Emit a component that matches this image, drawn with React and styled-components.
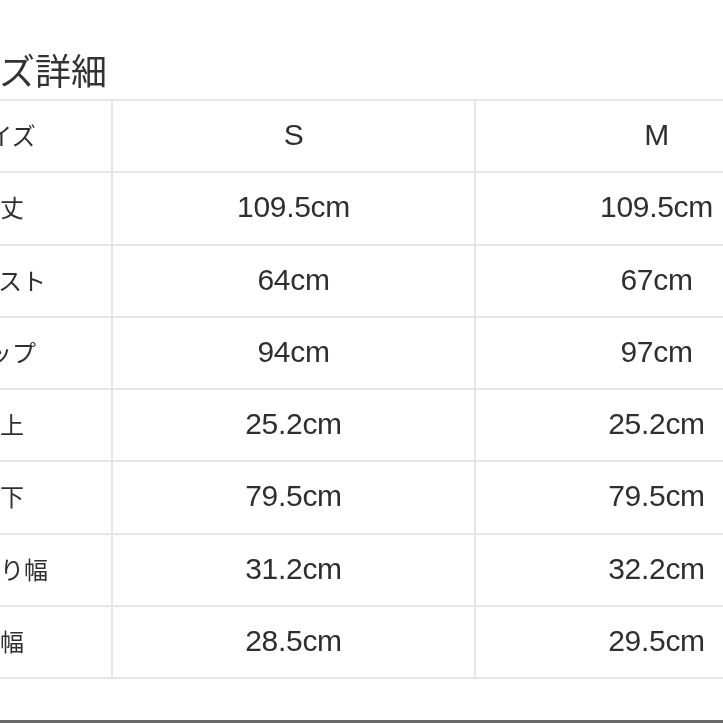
import React from "react";
import styled, { createGlobalStyle } from "styled-components";

const Global = createGlobalStyle`
  html, body {
    margin: 0;
    padding: 0;
    background: #ffffff;
    overflow: hidden;
  }
  * { box-sizing: border-box; }
`;

const Page = styled.div`
  width: 723px;
  height: 723px;
  overflow: hidden;
  display: flex;
  flex-direction: column;
  background: #ffffff;
  font-family: "Liberation Sans", "Noto Sans CJK JP", sans-serif;
  color: #2f2f2f;
`;

const Sheet = styled.div`
  margin-left: -111px;
  width: 950px;
  display: flex;
  flex-direction: column;
  filter: blur(0.3px);
`;

const Title = styled.h2`
  margin: 0;
  height: 99px;
  display: flex;
  align-items: flex-end;
  padding: 0 0 10px 39px;
  font-family: "Noto Sans CJK JP", sans-serif;
  font-weight: 400;
  font-size: 36px;
  line-height: 40px;
  color: #333333;
`;

const Table = styled.div`
  display: grid;
  grid-template-columns: 224px 363px 363px;
  grid-auto-rows: 72.25px;
  border-top: 2px solid #e6e6e6;
`;

const Cell = styled.div`
  display: flex;
  align-items: center;
  justify-content: center;
  border-right: 2px solid #e6e6e6;
  border-bottom: 2px solid #e6e6e6;
  padding-left: ${(p) => p.$offset || 0}px;
  padding-bottom: 2px;
  font-size: 30px;
  letter-spacing: -0.3px;
  line-height: 1;
  white-space: nowrap;
`;

const Label = styled(Cell)`
  font-family: "Noto Sans CJK JP", sans-serif;
  font-size: 24px;
  letter-spacing: 0;
`;

const BottomRule = styled.div`
  margin-top: 41px;
  height: 3px;
  background: #6a6a6a;
`;

const rows = [
  ["サイズ", "S", "M"],
  ["着丈", "109.5cm", "109.5cm"],
  ["バスト", "64cm", "67cm", 20],
  ["ヒップ", "94cm", "97cm"],
  ["股上", "25.2cm", "25.2cm"],
  ["股下", "79.5cm", "79.5cm"],
  ["わたり幅", "31.2cm", "32.2cm"],
  ["裾幅", "28.5cm", "29.5cm"],
];

export default function App() {
  return (
    <>
      <Global />
      <Page>
        <Sheet>
          <Title>サイズ詳細</Title>
          <Table>
            {rows.map(([label, s, m, off]) => (
              <React.Fragment key={label}>
                <Label $offset={off}>{label}</Label>
                <Cell>{s}</Cell>
                <Cell>{m}</Cell>
              </React.Fragment>
            ))}
          </Table>
        </Sheet>
        <BottomRule />
      </Page>
    </>
  );
}
